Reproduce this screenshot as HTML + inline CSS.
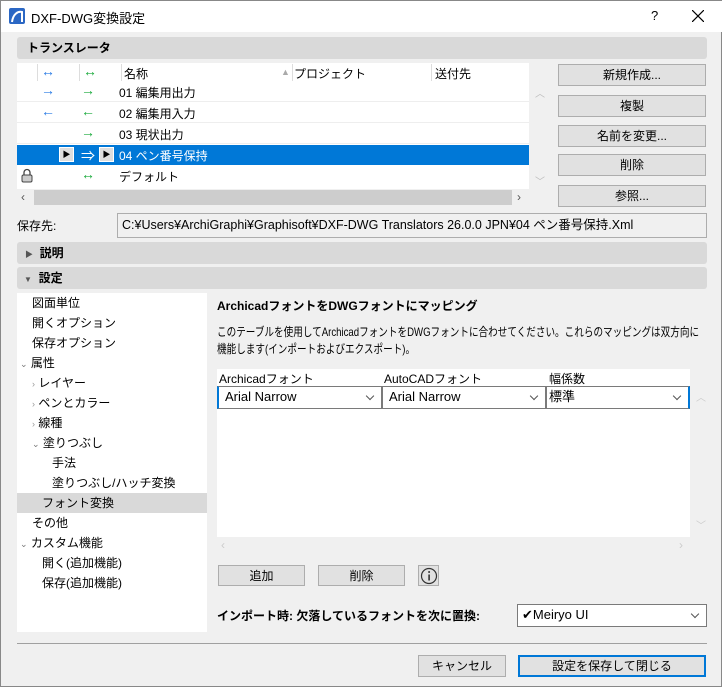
<!DOCTYPE html>
<html><head><meta charset="utf-8"><style>
*{box-sizing:border-box;margin:0;padding:0}
body{width:722px;height:687px;background:#f0f0f0;font-family:"Liberation Sans","Noto Sans CJK JP",sans-serif;font-size:12px;color:#000;position:relative;overflow:hidden;border:1px solid #888}
.a{position:absolute;white-space:nowrap}
.bar{position:absolute;left:16px;width:690px;height:22px;background:#d9d9d9;border-radius:3px;font-weight:bold;line-height:22px;padding-left:10px}
.btn{position:absolute;background:#e1e1e1;border:1px solid #adadad;text-align:center;line-height:20px}
.cb{position:absolute;background:#fff;border:1px solid #7a7a7a;line-height:20px;padding-left:6px;font-size:13px}
.cb:after{content:"";position:absolute;right:8px;top:6px;width:5px;height:5px;border-right:1px solid #555;border-bottom:1px solid #555;transform:rotate(45deg)}
.b{color:#2a7be4;font-size:14px}.g{color:#1aaa3c;font-size:14px}
.t{position:absolute;left:0;width:190px;height:20px;line-height:20px}
</style></head><body>
<div class="a" style="left:0;top:0;width:722px;height:31px;background:#fff"></div>
<svg class="a" style="left:8px;top:7px" width="16" height="16"><rect width="16" height="16" rx="2" fill="#2b67c4"/><path d="M3 14 C4 6 9 3 13 4 L13 14" stroke="#fff" stroke-width="2" fill="none"/></svg>
<div class="a" style="left:30px;top:7px;font-size:13px">DXF-DWG変換設定</div>
<div class="a" style="left:650px;top:7px;font-size:13px">?</div>
<svg class="a" style="left:691px;top:9px" width="12" height="12"><path d="M0 0L12 12M12 0L0 12" stroke="#000" stroke-width="1.2"/></svg>

<div class="bar" style="top:36px">トランスレータ</div>
<div class="a" style="left:16px;top:62px;width:512px;height:143px;background:#fff"></div>
<div class="a" style="left:36px;top:63px;width:1px;height:17px;background:#ddd"></div>
<div class="a" style="left:78px;top:63px;width:1px;height:17px;background:#ddd"></div>
<div class="a" style="left:120px;top:63px;width:1px;height:17px;background:#ddd"></div>
<div class="a" style="left:291px;top:63px;width:1px;height:17px;background:#ddd"></div>
<div class="a" style="left:430px;top:63px;width:1px;height:17px;background:#ddd"></div>
<div class="a b" style="left:40px;top:62px">↔</div><div class="a g" style="left:82px;top:62px">↔</div>
<div class="a" style="left:123px;top:64px">名称</div><div class="a" style="left:280px;top:66px;color:#aaa;font-size:9px">▲</div>
<div class="a" style="left:293px;top:64px">プロジェクト</div><div class="a" style="left:434px;top:64px">送付先</div>
<div class="a" style="left:16px;top:100px;width:512px;height:1px;background:#eee"></div>
<div class="a" style="left:16px;top:121px;width:512px;height:1px;background:#eee"></div>
<div class="a" style="left:16px;top:142px;width:512px;height:1px;background:#eee"></div>
<div class="a b" style="left:40px;top:81px">→</div><div class="a g" style="left:80px;top:81px">→</div><div class="a" style="left:118px;top:83px">01 編集用出力</div>
<div class="a b" style="left:40px;top:102px">←</div><div class="a g" style="left:80px;top:102px">←</div><div class="a" style="left:118px;top:104px">02 編集用入力</div>
<div class="a g" style="left:80px;top:123px">→</div><div class="a" style="left:118px;top:125px">03 現状出力</div>
<div class="a" style="left:16px;top:144px;width:512px;height:20px;background:#0078d7"></div>
<div class="a" style="left:58px;top:146px;width:15px;height:15px;background:#ddd;border:1px solid #fff;font-size:8px;line-height:13px;text-align:center">▶</div>
<div class="a" style="left:80px;top:145px;color:#fff;font-size:14px">⇒</div>
<div class="a" style="left:98px;top:146px;width:15px;height:15px;background:#ddd;border:1px solid #fff;font-size:8px;line-height:13px;text-align:center">▶</div>
<div class="a" style="left:118px;top:146px;color:#fff">04 ペン番号保持</div>
<svg class="a" style="left:20px;top:167px" width="12" height="15"><path d="M3 7V4.5a3 3 0 0 1 6 0V7" stroke="#444" stroke-width="1.3" fill="none"/><rect x="1" y="7" width="10" height="7" rx="1.5" fill="#ccc" stroke="#444"/></svg>
<div class="a g" style="left:80px;top:165px">↔</div><div class="a" style="left:118px;top:167px">デフォルト</div>
<div class="a" style="left:16px;top:188px;width:512px;height:17px;background:#f0f0f0"></div>
<div class="a" style="left:33px;top:189px;width:478px;height:15px;background:#cdcdcd"></div>
<div class="a" style="left:20px;top:189px;color:#555">‹</div><div class="a" style="left:516px;top:189px;color:#555">›</div>
<div class="a" style="left:534px;top:84px;color:#bbb;font-size:10px">︿</div>
<div class="a" style="left:534px;top:172px;color:#bbb;font-size:10px">﹀</div>
<div class="btn" style="left:557px;top:63px;width:148px;height:22px">新規作成...</div>
<div class="btn" style="left:557px;top:94px;width:148px;height:22px">複製</div>
<div class="btn" style="left:557px;top:124px;width:148px;height:22px">名前を変更...</div>
<div class="btn" style="left:557px;top:153px;width:148px;height:22px">削除</div>
<div class="btn" style="left:557px;top:184px;width:148px;height:22px">参照...</div>

<div class="a" style="left:16px;top:216px">保存先:</div>
<div class="a" style="left:116px;top:212px;width:590px;height:25px;background:#f0f0f0;border:1px solid #adadad;line-height:23px;padding-left:4px;font-size:12.5px">C:¥Users¥ArchiGraphi¥Graphisoft¥DXF-DWG Translators 26.0.0 JPN¥04 ペン番号保持.Xml</div>
<div class="bar" style="top:241px;padding-left:8px"><span style="font-size:8px;color:#555">▶</span>&nbsp; 説明</div>
<div class="bar" style="top:266px;padding-left:7px"><span style="font-size:8px;color:#555">▼</span>&nbsp; 設定</div>

<div class="a" style="left:16px;top:292px;width:190px;height:339px;background:#fff">
<div class="t" style="top:0;padding-left:15px">図面単位</div>
<div class="t" style="top:20px;padding-left:15px">開くオプション</div>
<div class="t" style="top:40px;padding-left:15px">保存オプション</div>
<div class="t" style="top:60px;padding-left:3px"><span style="color:#777;font-size:9px">⌄</span>&nbsp;属性</div>
<div class="t" style="top:80px;padding-left:15px"><span style="color:#999;font-size:9px">›</span>&nbsp;レイヤー</div>
<div class="t" style="top:100px;padding-left:15px"><span style="color:#999;font-size:9px">›</span>&nbsp;ペンとカラー</div>
<div class="t" style="top:120px;padding-left:15px"><span style="color:#999;font-size:9px">›</span>&nbsp;線種</div>
<div class="t" style="top:140px;padding-left:15px"><span style="color:#777;font-size:9px">⌄</span>&nbsp;塗りつぶし</div>
<div class="t" style="top:160px;padding-left:35px">手法</div>
<div class="t" style="top:180px;padding-left:35px">塗りつぶし/ハッチ変換</div>
<div class="t" style="top:200px;padding-left:25px;background:#d9d9d9">フォント変換</div>
<div class="t" style="top:220px;padding-left:15px">その他</div>
<div class="t" style="top:240px;padding-left:3px"><span style="color:#777;font-size:9px">⌄</span>&nbsp;カスタム機能</div>
<div class="t" style="top:260px;padding-left:25px">開く(追加機能)</div>
<div class="t" style="top:280px;padding-left:25px">保存(追加機能)</div>
</div>

<div class="a" style="left:216px;top:296px;font-weight:bold">ArchicadフォントをDWGフォントにマッピング</div>
<div class="a" style="left:216px;top:323px;line-height:17px;font-size:12px;transform:scaleX(0.8);transform-origin:0 0">このテーブルを使用してArchicadフォントをDWGフォントに合わせてください。これらのマッピングは双方向に<br>機能します(インポートおよびエクスポート)。</div>
<div class="a" style="left:216px;top:368px;width:473px;height:168px;background:#fff"></div>
<div class="a" style="left:218px;top:369px">Archicadフォント</div>
<div class="a" style="left:383px;top:369px">AutoCADフォント</div>
<div class="a" style="left:548px;top:369px">幅係数</div>
<div class="cb" style="left:216px;top:385px;width:165px;height:23px;border-left:2px solid #0078d7">Arial Narrow</div>
<div class="cb" style="left:381px;top:385px;width:164px;height:23px">Arial Narrow</div>
<div class="cb" style="left:545px;top:385px;width:144px;height:23px;padding-left:2px;border-right:2px solid #0078d7">標準</div>
<div class="a" style="left:695px;top:388px;color:#ccc;font-size:10px">︿</div>
<div class="a" style="left:695px;top:516px;color:#ccc;font-size:10px">﹀</div>
<div class="a" style="left:220px;top:537px;color:#ccc">‹</div><div class="a" style="left:678px;top:537px;color:#ccc">›</div>
<div class="btn" style="left:217px;top:564px;width:87px;height:21px">追加</div>
<div class="btn" style="left:317px;top:564px;width:87px;height:21px">削除</div>
<div class="btn" style="left:417px;top:564px;width:21px;height:21px;padding-top:1px"><svg width="18" height="18"><circle cx="9" cy="9" r="7.5" fill="none" stroke="#333" stroke-width="1.2"/><rect x="8.3" y="7.5" width="1.6" height="6" fill="#333"/><circle cx="9.1" cy="5" r="1" fill="#333"/></svg></div>
<div class="a" style="left:216px;top:606px;font-weight:bold">インポート時: 欠落しているフォントを次に置換:</div>
<div class="cb" style="left:516px;top:603px;width:190px;height:23px;padding-left:4px">✔Meiryo UI</div>
<div class="a" style="left:16px;top:642px;width:690px;height:1px;background:#a0a0a0"></div>
<div class="btn" style="left:417px;top:654px;width:88px;height:22px">キャンセル</div>
<div class="btn" style="left:517px;top:654px;width:188px;height:22px;border:2px solid #0078d7;line-height:18px">設定を保存して閉じる</div>
</body></html>
